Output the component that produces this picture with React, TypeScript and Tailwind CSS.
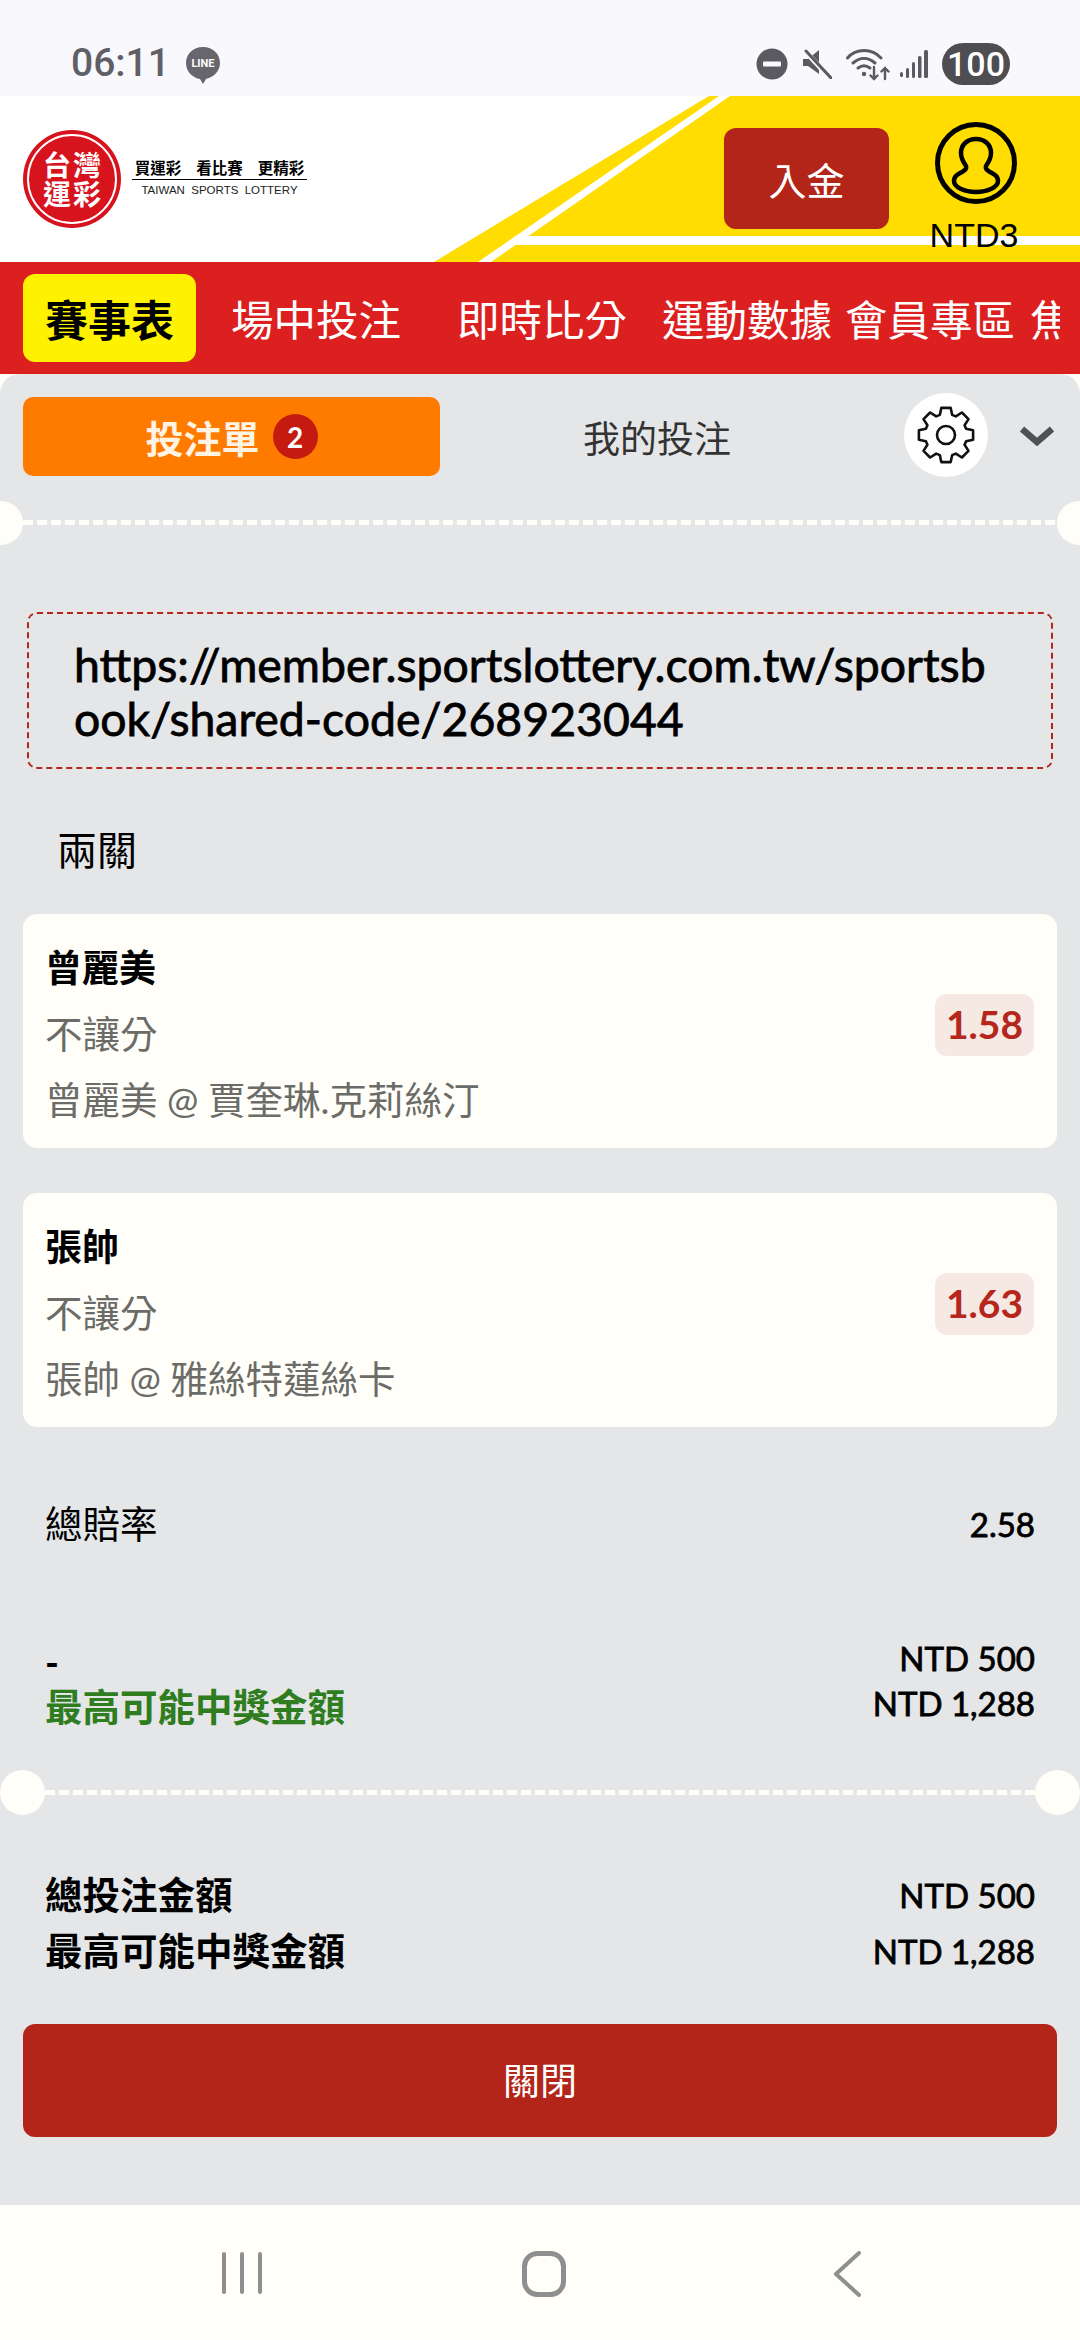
const sans = "font-['Lato','Noto_Sans_CJK_TC',sans-serif]"

// 8 tooth gear outline, centre 30,30
const gearPath = (() => {
    const pts: string[] = []
    for (let i = 0; i < 8; i++) {
        const a = (i * Math.PI) / 4 - Math.PI / 2
        const spots: [number, number][] = [
            [21, -0.3],
            [27.5, -0.17],
            [27.5, 0.17],
            [21, 0.3],
        ]
        spots.forEach(([r, d]) => {
            pts.push(`${(30 + r * Math.cos(a + d)).toFixed(1)},${(30 + r * Math.sin(a + d)).toFixed(1)}`)
        })
    }
    return 'M' + pts.join('L') + 'Z'
})()

function StatusBar() {
    return (
        <div className="h-[96px] bg-[#f8f8fd] flex items-start pt-[42px] pl-[71px] pr-[70px] justify-between font-['Roboto','Noto_Sans_CJK_TC',sans-serif]">
            <div className="flex items-center gap-[15px] h-[43px]">
                <span className="text-[39px] font-medium leading-none text-[#5f5f66]">06:11</span>
                <div className="relative w-[36px] h-[36px]">
                    <svg viewBox="0 0 36 38" className="w-[36px] h-[38px]">
                        <path d="M18 1C8 1 1 8 1 17c0 9 7 15 14 16l3 5 3-5c8-2 14-8 14-16C35 8 28 1 18 1z" fill="#66666c" />
                    </svg>
                    <span className="absolute inset-0 flex items-center justify-center text-[11px] font-bold text-white leading-none">LINE</span>
                </div>
            </div>
            <div className="flex items-center h-[43px]">
                <svg viewBox="0 0 32 32" className="w-[32px] h-[32px]">
                    <circle cx="16" cy="16" r="15.5" fill="#5a5a60" />
                    <rect x="7" y="13.5" width="18" height="5" rx="1" fill="#f8f8fd" />
                </svg>
                <svg viewBox="0 0 30 30" className="w-[30px] h-[30px] ml-[14px]">
                    <path d="M1 10h5l11-9v24l-11-8H1z" fill="#5a5a60" />
                    <path d="M2 1l26 28" stroke="#f8f8fd" strokeWidth="5" />
                    <path d="M4 2l25 27" stroke="#5a5a60" strokeWidth="3" strokeLinecap="round" />
                </svg>
                <svg viewBox="0 0 44 34" fill="none" className="w-[44px] h-[34px] ml-[14px]" stroke="#5a5a60" strokeLinecap="round">
                    <path d="M1.5 11C10 1 26 1 35 11" strokeWidth="3" />
                    <path d="M7 16c7-6 15-6 22 0" strokeWidth="3" />
                    <path d="M12 21c4-3 8-3 12 0" strokeWidth="3" />
                    <circle cx="18" cy="27" r="2.2" fill="#5a5a60" stroke="none" />
                    <path d="M28 20v12m-3.5-3.5l3.5 3.5 3.5-3.5M39 32V21m-3.5 3.5L39 21l3.5 3.5" strokeWidth="2.4" />
                </svg>
                <svg viewBox="0 0 28 30" className="w-[28px] h-[30px] ml-[10px]" fill="#5a5a60">
                    <rect x="0" y="23" width="3" height="5" rx="1.5" />
                    <rect x="6" y="19" width="3" height="10" rx="1.5" />
                    <rect x="12" y="13" width="3" height="16" rx="1.5" />
                    <rect x="18" y="7" width="3.5" height="22" rx="1.5" />
                    <rect x="24" y="1" width="4" height="28" rx="1.5" />
                </svg>
                <div className="ml-[14px] w-[68px] h-[42px] rounded-full bg-[#4d4d52] flex items-center justify-center text-white text-[34px] font-medium leading-none">100</div>
            </div>
        </div>
    )
}

function Logo() {
    return (
        <div className="flex items-center gap-[11px]">
            <div className="w-[98px] h-[98px] rounded-full bg-[#d7141e] p-[4px]">
                <div className="w-full h-full rounded-full border-2 border-white grid grid-cols-[30px_30px] place-content-center justify-items-center text-white font-bold text-[28px] leading-[29px] font-['Noto_Sans_CJK_TC',sans-serif]">
                    <span>台</span>
                    <span>灣</span>
                    <span>運</span>
                    <span>彩</span>
                </div>
            </div>
            <div className="w-[175px] flex flex-col items-center -mt-[2px]">
                <div className="flex gap-[15px] text-[15.5px] leading-[18px] font-bold text-black font-['Noto_Sans_CJK_TC',sans-serif] pb-[3px] border-b-[1.5px] border-black w-full justify-center whitespace-nowrap">
                    <span>買運彩</span>
                    <span>看比賽</span>
                    <span>更精彩</span>
                </div>
                <div className="text-[11.5px] leading-[15px] mt-[3px] text-[#222] whitespace-pre font-['Liberation_Sans',sans-serif]">TAIWAN  SPORTS  LOTTERY</div>
            </div>
        </div>
    )
}

function Header() {
    return (
        <div className="relative h-[166px] bg-white flex items-start pl-[23px]">
            <svg viewBox="0 0 1080 166" className="absolute inset-0 w-[1080px] h-[166px]">
                <polygon points="709,0 1080,0 1080,166 434,166" fill="#ffdd00" />
                <polygon points="719,0 730,0 491,166 478,166" fill="#ffffff" />
                <polygon points="516,140 1080,140 1080,149 503,149" fill="#ffffff" />
            </svg>
            <div className="relative mt-[34px]">
                <Logo />
            </div>
            <div className="relative ml-auto flex items-start">
                <button className="mt-[32px] w-[165px] h-[101px] rounded-[12px] bg-[#b22518] text-white text-[38px] leading-none font-['Noto_Sans_CJK_TC',sans-serif]">入金</button>
                <div className="w-[191px] flex flex-col items-center mt-[26px] pr-[17px]">
                    <svg viewBox="0 0 82 82" fill="none" stroke="#000" className="w-[82px] h-[82px]">
                        <circle cx="41" cy="41" r="38.5" strokeWidth="5" />
                        <path d="M41 17c-9 0-15 6-15 14 0 6 3 10 5 13 1 3-1 4-4 6-4 2-8 4-8 9 0 6 10 11 22 11s22-5 22-11c0-5-4-7-8-9-3-2-5-3-4-6 2-3 5-7 5-13 0-8-6-14-15-14z" strokeWidth="4.5" />
                    </svg>
                    <span className="text-[34px] leading-none mt-[14px] -ml-[4px] text-black font-['Liberation_Sans',sans-serif]">NTD3</span>
                </div>
            </div>
        </div>
    )
}

function NavBar() {
    return (
        <div className="h-[112px] bg-[#dc1f1f] pl-[23px] pr-[20px] flex items-center">
            <div className="flex-1 flex items-center overflow-hidden whitespace-nowrap text-[42.5px] leading-none text-white font-['Noto_Sans_CJK_TC',sans-serif]">
                <div className="w-[173px] h-[88px] rounded-[12px] bg-[#fff200] text-black text-[43px] font-bold flex items-center justify-center shrink-0">賽事表</div>
                <span className="ml-[35px]">場中投注</span>
                <span className="ml-[56px]">即時比分</span>
                <span className="ml-[35px]">運動數據</span>
                <span className="ml-[13px]">會員專區</span>
                <span className="ml-[15px]">焦</span>
            </div>
        </div>
    )
}

function Divider({ wide }: { wide?: boolean }) {
    return (
        <div className="flex items-center h-[45px]">
            <div className={wide ? 'w-[45px] h-[45px] rounded-full bg-[#fffef8] shrink-0' : 'w-[44px] h-[44px] -ml-[21px] rounded-full bg-[#fffef8] shrink-0'} />
            <div className="flex-1 h-[5px] bg-[repeating-linear-gradient(90deg,#fffef8_0_10px,transparent_10px_14px)]" />
            <div className={wide ? 'w-[45px] h-[45px] rounded-full bg-[#fffef8] shrink-0' : 'w-[44px] h-[44px] -mr-[21px] rounded-full bg-[#fffef8] shrink-0'} />
        </div>
    )
}

function BetCard({ name, detail, odds }: { name: string; detail: string; odds: string }) {
    return (
        <div className="h-[234px] mx-[23px] rounded-[14px] bg-[#fffef8] flex items-center justify-between pl-[22px] pr-[23px]">
            <div className="flex flex-col gap-[28px] mt-[5px] text-[37.5px] leading-[38px]">
                <span className="font-bold text-black text-[37px]">{name}</span>
                <span className="text-[#6b6b68]">不讓分</span>
                <span className="text-[#6b6b68]">{detail}</span>
            </div>
            <div className="w-[99px] h-[62px] -mt-[13px] rounded-[12px] bg-[#f6e8e2] flex items-center justify-center text-[39px] font-bold text-[#b5261c] leading-none">{odds}</div>
        </div>
    )
}

export default function App() {
    return (
        <div className={`w-[1080px] h-[2340px] flex flex-col overflow-hidden bg-[#fffef8] ${sans}`}>
            <StatusBar />
            <Header />
            <NavBar />
            <div className="flex-1 bg-[#e4e6e8] rounded-t-[20px] overflow-hidden flex flex-col">
                <div className="flex items-center pt-[20px] h-[105px] pl-[23px]">
                    <div className="w-[417px] h-[79px] rounded-[10px] bg-[#ff7b00] flex items-center justify-center gap-[13px]">
                        <span className="text-[38px] font-bold leading-none text-[#fff4e4] pt-[3px]">投注單</span>
                        <span className="w-[45px] h-[45px] rounded-full bg-[#c41a10] text-white text-[28px] font-bold flex items-center justify-center leading-none">2</span>
                    </div>
                    <span className="ml-[143px] text-[37px] leading-none text-[#333] pt-[3px]">我的投注</span>
                    <div className="ml-[173px] w-[84px] h-[84px] rounded-full bg-white flex items-center justify-center -mt-[3px]">
                        <svg viewBox="0 0 60 60" fill="none" stroke="#111" strokeWidth="2.6" strokeLinejoin="round" className="w-[60px] h-[60px]">
                            <path d={gearPath} />
                            <circle cx="30" cy="30" r="9" />
                        </svg>
                    </div>
                    <svg viewBox="0 0 36 20" fill="none" className="ml-[31px] w-[36px] h-[20px] -mt-[1px]">
                        <path d="M3 3l15 13L33 3" stroke="#4f5156" strokeWidth="6.5" />
                    </svg>
                </div>
                <div className="mt-[21px]">
                    <Divider />
                </div>
                <div className="mt-[67px] mx-[27px] h-[157px] border-2 border-dashed border-[#b5261c] rounded-[10px] pl-[45px] pr-[60px] flex items-center">
                    <p className="text-[46.4px] leading-[54px] [-webkit-text-stroke:0.8px_#000] text-black break-all">https://member.sportslottery.com.tw/sportsbook/shared-code/268923044</p>
                </div>
                <div className="mt-[57px] pl-[57px] text-[40px] leading-[48px] text-black">兩關</div>
                <div className="mt-[40px] flex flex-col gap-[45px]">
                    <BetCard name="曾麗美" detail="曾麗美 @ 賈奎琳.克莉絲汀" odds="1.58" />
                    <BetCard name="張帥" detail="張帥 @ 雅絲特蓮絲卡" odds="1.63" />
                </div>
                <div className="mt-[75px] px-[45px] flex items-center justify-between h-[44px]">
                    <span className="text-[37.5px] leading-none text-black">總賠率</span>
                    <span className="text-[33px] leading-none text-black [-webkit-text-stroke:0.8px_#000]">2.58</span>
                </div>
                <div className="mt-[95px] px-[45px] flex justify-between">
                    <div className="flex flex-col text-[37.5px] leading-[44px] font-bold">
                        <span className="text-black">-</span>
                        <span className="text-[#2f7d1f]">最高可能中獎金額</span>
                    </div>
                    <div className="flex flex-col items-end text-[33px] leading-[45px] text-black [-webkit-text-stroke:0.8px_#000] -mt-[5px]">
                        <span>NTD 500</span>
                        <span>NTD 1,288</span>
                    </div>
                </div>
                <div className="mt-[41px]">
                    <Divider wide />
                </div>
                <div className="mt-[58px] px-[45px] flex justify-between items-center text-[37.5px] leading-[44px] font-bold text-black">
                    <span>總投注金額</span>
                    <span className="text-[33px] font-normal [-webkit-text-stroke:0.8px_#000]">NTD 500</span>
                </div>
                <div className="mt-[12px] px-[45px] flex justify-between items-center text-[37.5px] leading-[44px] font-bold text-black">
                    <span>最高可能中獎金額</span>
                    <span className="text-[33px] font-normal [-webkit-text-stroke:0.8px_#000]">NTD 1,288</span>
                </div>
                <button className="mt-[51px] mx-[23px] h-[113px] shrink-0 rounded-[12px] bg-[#b22518] text-white text-[37px]">關閉</button>
            </div>
            <div className="h-[135px] shrink-0 bg-[#fffef8] flex items-start pt-[46px] pl-[222px]">
                <svg viewBox="0 0 40 44" className="w-[40px] h-[44px]" fill="#8f8f8f">
                    <rect x="0" y="1" width="4" height="42" rx="2" />
                    <rect x="18" y="1" width="4" height="42" rx="2" />
                    <rect x="36" y="1" width="4" height="42" rx="2" />
                </svg>
                <svg viewBox="0 0 44 46" fill="none" className="w-[44px] h-[46px] ml-[260px]">
                    <rect x="2.5" y="2.5" width="39" height="41" rx="13" stroke="#8f8f8f" strokeWidth="5" />
                </svg>
                <svg viewBox="0 0 30 46" fill="none" className="w-[30px] h-[46px] ml-[266px]">
                    <path d="M27 2L4 23l23 21" stroke="#8f8f8f" strokeWidth="4" strokeLinecap="round" strokeLinejoin="round" />
                </svg>
            </div>
        </div>
    )
}
